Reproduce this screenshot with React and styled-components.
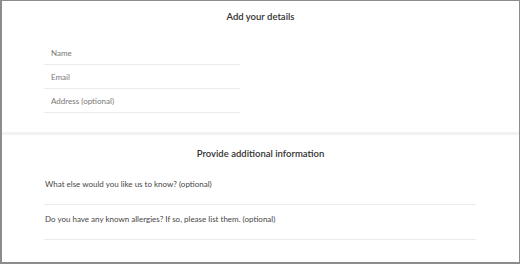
import React from "react";
import styled, { createGlobalStyle } from "styled-components";

const GlobalStyle = createGlobalStyle`
  html, body {
    margin: 0;
    padding: 0;
    background: #fff;
  }
  body {
    font-family: Lato, "Open Sans", sans-serif;
  }
`;

const Frame = styled.div`
  box-sizing: border-box;
  width: 520px;
  height: 264px;
  border: 1px solid #8c8c8c;
  border-left-width: 2px;
  border-bottom-width: 2px;
  display: flex;
  flex-direction: column;
  background: #fff;
`;

const Section = styled.section`
  height: ${(props) => props.height}px;
  padding-top: ${(props) => props.top}px;
  box-sizing: border-box;
  border-bottom: ${(props) => (props.divider ? "3px solid #f2f2f2" : "none")};
`;

const Heading = styled.h2`
  margin: 0;
  text-align: center;
  font-size: 9.5px;
  font-weight: 600;
  color: #323130;
  line-height: 14px;
`;

const Fields = styled.div`
  width: 196px;
  margin: ${(props) => props.top}px 0 0 42px;
  display: flex;
  flex-direction: column;
`;

const Field = styled.div`
  height: 24px;
  box-sizing: border-box;
  border-bottom: 1px solid #ebebeb;
  padding-left: 7px;
  display: flex;
  align-items: center;
  font-size: 8px;
  color: #797775;
`;

const Questions = styled.div`
  width: 432px;
  margin: 9px 0 0 42px;
  display: flex;
  flex-direction: column;
`;

const Question = styled.div`
  height: 35px;
  box-sizing: border-box;
  border-bottom: 1px solid #ebebeb;
  padding: 8px 0 0 1px;
  font-size: 8px;
  line-height: 12px;
  color: #484644;
`;

export default function App() {
  return (
    <>
      <GlobalStyle />
      <Frame>
        <Section height={134} top={9} divider>
          <Heading>Add your details</Heading>
          <Fields top={17}>
            <Field>Name</Field>
            <Field>Email</Field>
            <Field>Address (optional)</Field>
          </Fields>
        </Section>
        <Section top={12}>
          <Heading>Provide additional information</Heading>
          <Questions>
            <Question>What else would you like us to know? (optional)</Question>
            <Question>
              Do you have any known allergies? If so, please list them. (optional)
            </Question>
          </Questions>
        </Section>
      </Frame>
    </>
  );
}
